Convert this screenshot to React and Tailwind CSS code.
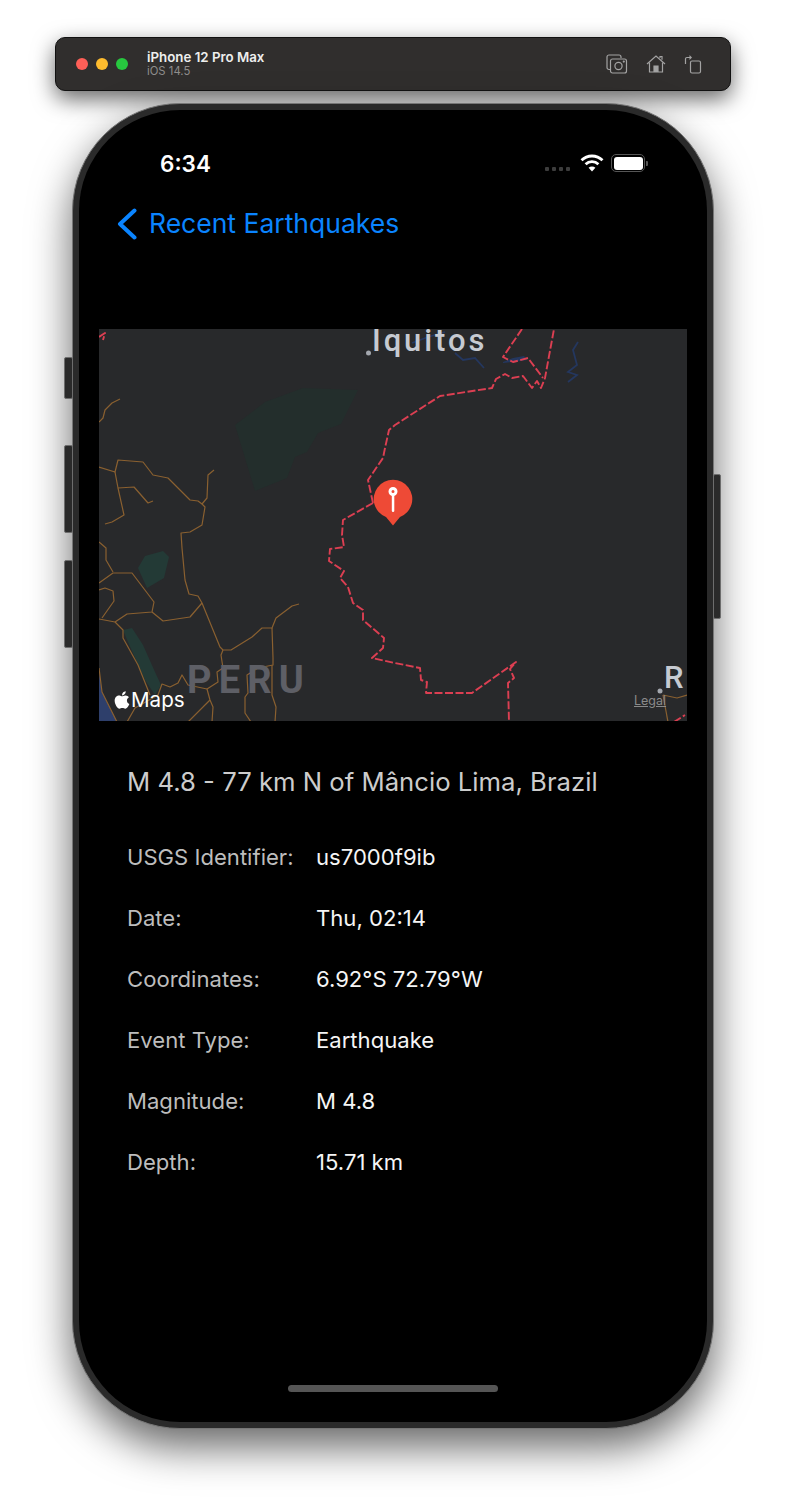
import { FaApple } from 'react-icons/fa';

const BROWN_LINES = [
  '99,422 103,418 105,410 112,403 120,399',
  '99,467 115,472 118,460 143,462 153,475 168,478 190,500 198,501 202,504 207,498 208,475 214,470',
  '115,472 118,488 134,487 148,503 153,501',
  '118,488 124,515 112,522 105,524',
  '202,504 205,507 202,525 190,532 181,533 182,548 185,580 189,594 198,596 202,603 220,647 223,650 231,650 252,637 262,628 272,628 276,618 292,606 299,604',
  '272,628 273,658 273,665 258,668 247,675 248,693 245,697 245,713 251,722',
  '272,665 272,695 276,707 275,722',
  '99,542 106,548 106,560 113,572',
  '99,583 113,573 132,573 154,602 152,612 127,614 115,622 99,619',
  '152,612 163,621 190,617 202,603',
  '99,590 105,588 113,591 114,601 102,618',
  '115,622 123,630 123,638 138,665 150,695',
  '99,668 102,692 117,722',
  '223,650 221,655 223,668 217,672 218,682 207,689 210,700 213,707 212,722',
  '210,700 188,722',
  '127,722 135,708 158,695 162,684 170,687 178,683 182,675 188,685 207,689',
  '663,695 677,698 687,695',
  '663,695 668,722',
];

const RED_LINES = [
  '373,503 368,480 383,458 385,448 389,430 395,425 440,396 492,388 496,379 505,374 512,378 523,376 532,388 537,381 541,388 545,378 554,329',
  '522,329 503,357 513,362 528,358 543,378',
  '373,503 343,520 342,535 344,547 330,549 329,561 344,571 340,578 348,587 353,603 363,610 363,620 384,638 383,648 372,658 395,663 420,668 421,680 427,682 426,693 472,693 516,662 510,669 514,678 508,683 509,722',
  '99,337 105,333 103,340',
  '674,722 685,715',
];

const BLUE_LINES = [
  '412,343 428,337 445,332',
  '455,353 463,360 475,358 484,368',
  '578,342 573,350 577,365 568,372 577,375 568,382',
];

const DETAILS = [
  ['USGS Identifier:', 'us7000f9ib'],
  ['Date:', 'Thu, 02:14'],
  ['Coordinates:', '6.92°S 72.79°W'],
  ['Event Type:', 'Earthquake'],
  ['Magnitude:', 'M 4.8'],
  ['Depth:', '15.71 km'],
];

function ToolbarIcons() {
  return (
    <div className="flex items-center gap-[18px] text-[#a3a3a3]">
      <svg width="22" height="22" viewBox="0 0 22 22" fill="none" stroke="currentColor" strokeWidth="1.2">
        <path d="M4 16.5H3a2 2 0 0 1-2-2V4a2 2 0 0 1 2-2h10a2 2 0 0 1 2 2v1" />
        <rect x="4.5" y="6" width="16" height="14" rx="2" />
        <circle cx="12.5" cy="13" r="3.6" />
        <circle cx="17.8" cy="8.6" r="0.5" />
      </svg>
      <svg width="20" height="20" viewBox="0 0 20 20" fill="none" stroke="currentColor" strokeWidth="1.2">
        <path d="M1 10 10 2l9 8" />
        <path d="M3.5 8.5V18h13V8.5" />
        <path d="M8 18v-6h4v6" fill="currentColor" />
        <path d="M14 4V2.5h2v3.2" />
      </svg>
      <svg width="18" height="20" viewBox="0 0 18 20" fill="none" stroke="currentColor" strokeWidth="1.2">
        <rect x="6.5" y="7" width="10" height="12" rx="1.5" />
        <path d="M1.5 10V5a1.5 1.5 0 0 1 1.5-1.5h4" />
        <path d="M5.5 1 8 3.5 5.5 6" fill="currentColor" stroke="none" />
      </svg>
    </div>
  );
}

function Toolbar() {
  return (
    <div className="mt-[37px] flex h-[54px] w-[676px] items-center justify-between rounded-[10px] border border-[#111] bg-[#302e2d] pl-[20px] pr-[28px] shadow-[0_8px_22px_rgba(0,0,0,0.6)]">
      <div className="flex items-center">
        <div className="flex gap-[8px]">
          <span className="h-3 w-3 rounded-full bg-[#fe5f57]" />
          <span className="h-3 w-3 rounded-full bg-[#febc2e]" />
          <span className="h-3 w-3 rounded-full bg-[#27c83f]" />
        </div>
        <div className="ml-[19px]">
          <div className="text-[13.3px] font-semibold leading-[15px] text-[#eeeeee]">iPhone 12 Pro Max</div>
          <div className="text-[11.3px] leading-[13px] text-[#8f8d8c]">iOS 14.5</div>
        </div>
      </div>
      <ToolbarIcons />
    </div>
  );
}

function StatusBar() {
  return (
    <div className="mt-[42px] flex h-[24px] items-center justify-between pl-[81px] pr-[59px]">
      <span className="text-[22.5px] font-semibold leading-[24px] text-white">6:34</span>
      <div className="flex items-center">
        <div className="mt-[10px] flex gap-[2.5px]">
          <span className="h-[4.5px] w-[4.5px] rounded-[1px] bg-[#3d3d3d]" />
          <span className="h-[4.5px] w-[4.5px] rounded-[1px] bg-[#3d3d3d]" />
          <span className="h-[4.5px] w-[4.5px] rounded-[1px] bg-[#3d3d3d]" />
          <span className="h-[4.5px] w-[4.5px] rounded-[1px] bg-[#3d3d3d]" />
        </div>
        <svg className="ml-[10px] -mt-[2px]" width="24" height="18" viewBox="0 0 24 18" fill="none" stroke="white" strokeWidth="2.8">
          <path d="M1.5 6.3a15 15 0 0 1 21 0" />
          <path d="M5.6 10.2a9.2 9.2 0 0 1 12.8 0" />
          <path d="M12 17.5 8.6 13.8a4.8 4.8 0 0 1 6.8 0Z" fill="white" stroke="none" />
        </svg>
        <div className="ml-[7px] -mt-[2px] flex items-center">
          <div className="h-[18px] w-[34px] rounded-[5px] border border-[#555] p-[1.5px]">
            <div className="h-full w-full rounded-[3px] bg-white" />
          </div>
          <span className="ml-[1px] h-[5px] w-[2px] rounded-r-[1px] bg-[#555]" />
        </div>
      </div>
    </div>
  );
}

function MapDrawing() {
  return (
    <svg className="block" width="588" height="392" viewBox="99 329 588 392" fill="none">
      <polygon points="235,425 265,402 303,388 358,390 341,424 318,433 307,452 295,457 287,478 255,491" fill="#232e2c" />
      <polygon points="138,568 145,556 163,551 169,557 164,578 147,588" fill="#233a36" />
      <polygon points="123,630 132,628 143,645 155,672 161,685 155,695 145,680 128,642" fill="#233a36" />
      <polygon points="99,672 102,692 117,722 99,722" fill="#2e3f6b" />
      <polygon points="503,362 513,358 524,356 527,360 513,362 503,363" fill="#24375f" />
      {BLUE_LINES.map((p) => (
        <polyline key={p} points={p} stroke="#24375f" strokeWidth="1.8" />
      ))}
      {BROWN_LINES.map((p) => (
        <polyline key={p} points={p} stroke="#8a6030" strokeWidth="1.2" strokeLinejoin="round" />
      ))}
      {RED_LINES.map((p) => (
        <polyline key={p} points={p} stroke="#dc3f52" strokeWidth="1.9" strokeDasharray="8 2.5" strokeLinejoin="round" />
      ))}
      <circle cx="368.5" cy="353" r="2.5" fill="#a3a7ae" />
      <circle cx="660" cy="691" r="2.5" fill="#a3a7ae" />
      <path d="M393 525.5 386 517a19.3 19.3 0 1 1 14 0Z" fill="#ee4a36" />
      <rect x="391.8" y="493" width="2.5" height="19" rx="1.2" fill="white" />
      <circle cx="393" cy="491.5" r="3" fill="#ee4a36" stroke="white" strokeWidth="3" />
    </svg>
  );
}

function MapPanel() {
  return (
    <div className="relative mx-5 mt-[85px] h-[392px] w-[588px] bg-[#28292b] font-['Roboto',sans-serif]">
      <MapDrawing />
      <span className="absolute left-[273px] top-[1px] text-[31px] font-medium leading-[22px] tracking-[2.9px] text-[#c6cad1]">Iquitos</span>
      <span className="absolute left-[88px] top-[329px] text-[38px] font-bold leading-[44px] tracking-[7.2px] text-[#5e5f66]">PERU</span>
      <span className="absolute left-[565px] top-[331px] text-[31px] font-medium leading-[36px] text-[#c6cad1]">R</span>
      <span className="absolute left-[535px] top-[364px] text-[12.5px] leading-[15px] text-[#8a8a8a] underline font-['Inter',sans-serif]">Legal</span>
      <div className="absolute left-[13px] top-[358px] flex items-center text-white font-['Inter',sans-serif]">
        <FaApple size={20} />
        <span className="-ml-px text-[20.6px] leading-[26px]">Maps</span>
      </div>
    </div>
  );
}

function Details() {
  return (
    <div className="px-[48px]">
      <h1 className="mt-[45px] text-[25.7px] font-normal leading-[32px] text-[#cccccc]">M 4.8 - 77 km N of Mâncio Lima, Brazil</h1>
      <div className="mt-[43px] flex flex-col gap-[29px]">
        {DETAILS.map(([label, value]) => (
          <div key={label} className="flex text-[22.1px] leading-[32px]">
            <span className="w-[189px] text-[#bdbdbd]">{label}</span>
            <span className="text-[#f5f5f5]">{value}</span>
          </div>
        ))}
      </div>
    </div>
  );
}

function SideButton({ className }) {
  return <span className={`absolute rounded-[2px] border border-[#6d6d6d] bg-[#2a2a2a] ${className}`} />;
}

function Phone() {
  return (
    <div className="relative mt-[12px] h-[1326px] w-[642px] rounded-[108px] border border-[#777] bg-[#2a2a2a] p-[6px] shadow-[0_18px_42px_rgba(0,0,0,0.6)]">
      <SideButton className="left-[-9px] top-[253px] h-[42px] w-[9px]" />
      <SideButton className="left-[-9px] top-[341px] h-[88px] w-[9px]" />
      <SideButton className="left-[-9px] top-[456px] h-[88px] w-[9px]" />
      <SideButton className="right-[-8px] top-[370px] h-[145px] w-[8px]" />
      <div className="flex h-full flex-col overflow-hidden rounded-[101px] bg-black">
        <StatusBar />
        <div className="mt-[28px] flex h-[40px] items-center pl-[38px]">
          <svg width="20" height="32" viewBox="0 0 20 32" fill="none" stroke="#0a84ff" strokeWidth="4" strokeLinecap="round" strokeLinejoin="round">
            <path d="M17.5 2.5 3 16l14.5 13.5" />
          </svg>
          <span className="-mt-[2px] ml-[12px] text-[26.5px] leading-[32px] text-[#0a84ff]">Recent Earthquakes</span>
        </div>
        <MapPanel />
        <Details />
        <div className="mx-auto mb-[30px] mt-auto h-[7px] w-[210px] rounded-full bg-[#555555]" />
      </div>
    </div>
  );
}

export default function App() {
  return (
    <div className="flex h-[1507px] w-[786px] flex-col items-center overflow-hidden bg-white font-['Inter',sans-serif]">
      <Toolbar />
      <Phone />
    </div>
  );
}
